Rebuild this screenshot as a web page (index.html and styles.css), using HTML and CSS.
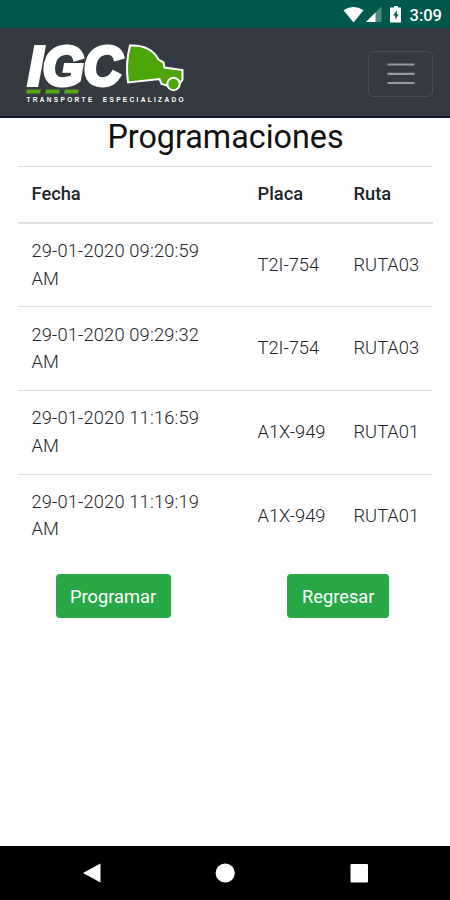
FILE: index.html
```html
<!DOCTYPE html>
<html lang="es">

<head>
    <meta charset="UTF-8">
    <meta name="viewport" content="width=device-width, initial-scale=1.0">
    <title>Programaciones</title>
    <link rel="stylesheet" href="styles.css">
</head>

<body>
    <div class="status-bar">
        <svg class="status-icons" width="62" height="20" viewBox="0 0 62 20">
            <path d="M0.5 4.3 Q10.5 -2.5 20.5 4.3 L10.5 16.5 Z" fill="#fff" />
            <path d="M38.5 0.5 V16 H23 Z" fill="#4d8b81" />
            <path d="M32.5 6.5 V16 H23 Z" fill="#fff" />
            <path d="M51 0 h4 v1.5 h3 v15 h-11 v-15 h4 Z" fill="#fff" />
            <path d="M53.8 4.5 L50 9.5 H52.3 V13.5 L55.8 8.5 H53.8 Z" fill="#00584c" />
        </svg>
        <span class="clock">3:09</span>
    </div>

    <nav class="navbar">
        <svg class="logo" width="162" height="82" viewBox="0 -8 162 82">
            <text class="logo-name" x="4" y="45.5" textLength="94" lengthAdjust="spacingAndGlyphs">IGC</text>
            <!-- camion -->
            <path class="truck" d="M106 6.5 C118 6 129 10 134.5 20.5 L139.5 23.5 L140.5 28.5 L158.5 31 L158.5 41 L156 44 C154 38 145 39 144.5 47 L137.5 45 L135.5 40 L104 43.5 C102 30 103 18 106 6.5 Z" />
            <circle class="truck" cx="149.5" cy="45" r="6.2" />
            <path d="M4 50.5 h13 l-1 4 h-14 l1-4 Z M22 50.5 h14 l-1 4 h-14 l1-4 Z M41 50.5 h14 l-1 4 h-14 l1-4 Z" fill="#55a616" />
            <text class="logo-sub" x="2.5" y="63" textLength="157">TRANSPORTE&#160; ESPECIALIZADO</text>
        </svg>
        <button class="toggler" aria-label="Menu">
            <svg width="28" height="24" viewBox="0 0 28 24">
                <path d="M0.5 2.5 H27.5 M0.5 11.8 H27.5 M0.5 21 H27.5" stroke="#989b9e" stroke-width="2.2" />
            </svg>
        </button>
    </nav>

    <main class="container">
        <h1>Programaciones</h1>
        <table class="table">
            <thead>
                <tr>
                    <th class="fecha">Fecha</th>
                    <th class="placa">Placa</th>
                    <th>Ruta</th>
                </tr>
            </thead>
            <tbody>
                <tr>
                    <td>29-01-2020 09:20:59 AM</td>
                    <td>T2I-754</td>
                    <td>RUTA03</td>
                </tr>
                <tr>
                    <td>29-01-2020 09:29:32 AM</td>
                    <td>T2I-754</td>
                    <td>RUTA03</td>
                </tr>
                <tr>
                    <td>29-01-2020 11:16:59 AM</td>
                    <td>A1X-949</td>
                    <td>RUTA01</td>
                </tr>
                <tr>
                    <td>29-01-2020 11:19:19 AM</td>
                    <td>A1X-949</td>
                    <td>RUTA01</td>
                </tr>
            </tbody>
        </table>
        <div class="buttons">
            <button class="btn">Programar</button>
            <button class="btn">Regresar</button>
        </div>
    </main>

    <div class="nav-bar">
        <svg width="20" height="20" viewBox="0 0 20 20"><path d="M2 10 L19.5 0.5 V19.5 Z" fill="#fff" /></svg>
        <svg width="20" height="20" viewBox="0 0 20 20"><circle cx="10.2" cy="10" r="9.6" fill="#fff" /></svg>
        <svg width="20" height="20" viewBox="0 0 20 20"><rect x="1.5" y="1" width="17.5" height="18.5" rx="1" fill="#fff" /></svg>
    </div>
</body>

</html>
```
FILE: styles.css
```css
* {
    box-sizing: border-box;
}

body {
    margin: 0;
    height: 900px;
    display: flex;
    flex-direction: column;
    font-family: Roboto, sans-serif;
    font-size: 18.3px;
    line-height: 27.6px;
    color: #212529;
    background-color: #fff;
    overflow: hidden;
}

/* Barra de estado */
.status-bar {
    height: 28px;
    padding: 6px 8px 0 0;
    display: flex;
    justify-content: flex-end;
    gap: 5px;
    background-color: #00584c;
    color: #fff;
}

.status-icons {
    width: 62px;
    flex: none;
}

.clock {
    font-size: 16.5px;
    font-weight: 500;
    line-height: 19px;
}

/* Navbar */
.navbar {
    height: 90px;
    padding: 0 17px 0 24px;
    display: flex;
    align-items: center;
    justify-content: space-between;
    background-color: #343a40;
    border-bottom: 2px solid #15182b;
}

.logo-name {
    font-family: "Liberation Sans", Arial, sans-serif;
    font-size: 55px;
    font-weight: bold;
    font-style: italic;
    fill: #fff;
    stroke: #fff;
    stroke-width: 4px;
}

.logo-sub {
    font-family: "Liberation Sans", Arial, sans-serif;
    font-size: 6.5px;
    font-weight: bold;
    fill: #fff;
}

.truck {
    fill: #4ca50a;
    stroke: #fff;
    stroke-width: 2px;
}

.toggler {
    width: 65px;
    height: 46px;
    margin-top: 3px;
    padding: 0;
    display: flex;
    align-items: center;
    justify-content: center;
    background: none;
    border: 1px solid #484d52;
    border-radius: 5px;
}

/* Contenido */
.container {
    flex: 1;
    padding: 0 17px 0 18px;
}

h1 {
    margin: 0;
    height: 48px;
    font-size: 32.3px;
    font-weight: 400;
    line-height: 39px;
    text-align: center;
    color: #111;
}

.table {
    width: 415px;
    table-layout: fixed;
    border-collapse: separate;
    border-spacing: 0;
}

.table th,
.table td {
    padding: 13px 0 14px 13.5px;
    border-top: 1px solid #dee2e6;
    text-align: left;
    vertical-align: middle;
    font-weight: 300;
}

.table th {
    height: 56px;
    padding: 12px 0 14px 13.5px;
    font-weight: 500;
}

.table td {
    height: 83.6px;
    white-space: nowrap;
}

.table td:first-child {
    padding-right: 28px;
    white-space: normal;
    letter-spacing: 0.16px;
}

.table tbody tr:first-child td {
    height: 84.4px;
    border-top: 2px solid #dee2e6;
}

.fecha {
    width: 226px;
}

.placa {
    width: 96px;
}

.buttons {
    padding: 17px 44px 0 37.5px;
    display: flex;
    justify-content: space-between;
}

.btn {
    height: 44px;
    padding: 0 14.5px;
    font-family: inherit;
    font-size: 18.3px;
    color: #fff;
    background-color: #28a745;
    border: none;
    border-radius: 4px;
}

/* Barra de navegacion */
.nav-bar {
    height: 54px;
    padding: 0 81px;
    display: flex;
    align-items: center;
    justify-content: space-between;
    background-color: #000;
}
```
